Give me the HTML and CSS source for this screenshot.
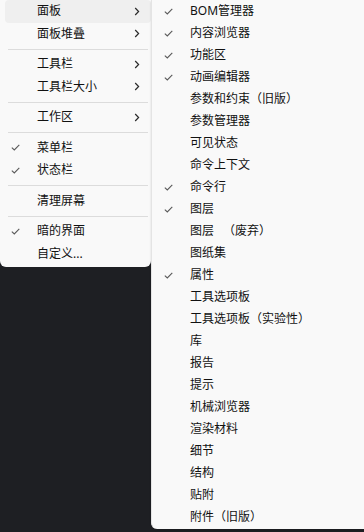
FILE: index.html
```html
<!DOCTYPE html>
<html>
<head>
    <title>面板菜单</title>
    <link rel="stylesheet" href="styles.css">
</head>
<body>
    <div class="menu main-menu">
        <div class="item active"><span class="check"></span><span class="label">面板</span><span class="arrow"><svg width="6" height="9" viewBox="0 0 6 9"><path d="M1.2 1 L4.6 4.5 L1.2 8" /></svg></span></div>
        <div class="item"><span class="check"></span><span class="label">面板堆叠</span><span class="arrow"><svg width="6" height="9" viewBox="0 0 6 9"><path d="M1.2 1 L4.6 4.5 L1.2 8" /></svg></span></div>
        <div class="separator"></div>
        <div class="item"><span class="check"></span><span class="label">工具栏</span><span class="arrow"><svg width="6" height="9" viewBox="0 0 6 9"><path d="M1.2 1 L4.6 4.5 L1.2 8" /></svg></span></div>
        <div class="item"><span class="check"></span><span class="label">工具栏大小</span><span class="arrow"><svg width="6" height="9" viewBox="0 0 6 9"><path d="M1.2 1 L4.6 4.5 L1.2 8" /></svg></span></div>
        <div class="separator"></div>
        <div class="item"><span class="check"></span><span class="label">工作区</span><span class="arrow"><svg width="6" height="9" viewBox="0 0 6 9"><path d="M1.2 1 L4.6 4.5 L1.2 8" /></svg></span></div>
        <div class="separator"></div>
        <div class="item"><span class="check"><svg width="9" height="7" viewBox="0 0 9 7"><path d="M0.8 3.6 L3.3 6 L8.3 0.8" /></svg></span><span class="label">菜单栏</span></div>
        <div class="item"><span class="check"><svg width="9" height="7" viewBox="0 0 9 7"><path d="M0.8 3.6 L3.3 6 L8.3 0.8" /></svg></span><span class="label">状态栏</span></div>
        <div class="separator"></div>
        <div class="item"><span class="check"></span><span class="label">清理屏幕</span></div>
        <div class="separator"></div>
        <div class="item"><span class="check"><svg width="9" height="7" viewBox="0 0 9 7"><path d="M0.8 3.6 L3.3 6 L8.3 0.8" /></svg></span><span class="label">暗的界面</span></div>
        <div class="item"><span class="check"></span><span class="label">自定义...</span></div>
    </div>

    <div class="menu sub-menu">
        <div class="item"><span class="check"><svg width="9" height="7" viewBox="0 0 9 7"><path d="M0.8 3.6 L3.3 6 L8.3 0.8" /></svg></span><span class="label">BOM管理器</span></div>
        <div class="item"><span class="check"><svg width="9" height="7" viewBox="0 0 9 7"><path d="M0.8 3.6 L3.3 6 L8.3 0.8" /></svg></span><span class="label">内容浏览器</span></div>
        <div class="item"><span class="check"><svg width="9" height="7" viewBox="0 0 9 7"><path d="M0.8 3.6 L3.3 6 L8.3 0.8" /></svg></span><span class="label">功能区</span></div>
        <div class="item"><span class="check"><svg width="9" height="7" viewBox="0 0 9 7"><path d="M0.8 3.6 L3.3 6 L8.3 0.8" /></svg></span><span class="label">动画编辑器</span></div>
        <div class="item"><span class="check"></span><span class="label">参数和约束（旧版）</span></div>
        <div class="item"><span class="check"></span><span class="label">参数管理器</span></div>
        <div class="item"><span class="check"></span><span class="label">可见状态</span></div>
        <div class="item"><span class="check"></span><span class="label">命令上下文</span></div>
        <div class="item"><span class="check"><svg width="9" height="7" viewBox="0 0 9 7"><path d="M0.8 3.6 L3.3 6 L8.3 0.8" /></svg></span><span class="label">命令行</span></div>
        <div class="item"><span class="check"><svg width="9" height="7" viewBox="0 0 9 7"><path d="M0.8 3.6 L3.3 6 L8.3 0.8" /></svg></span><span class="label">图层</span></div>
        <div class="item"><span class="check"></span><span class="label">图层&ensp; （废弃）</span></div>
        <div class="item"><span class="check"></span><span class="label">图纸集</span></div>
        <div class="item"><span class="check"><svg width="9" height="7" viewBox="0 0 9 7"><path d="M0.8 3.6 L3.3 6 L8.3 0.8" /></svg></span><span class="label">属性</span></div>
        <div class="item"><span class="check"></span><span class="label">工具选项板</span></div>
        <div class="item"><span class="check"></span><span class="label">工具选项板（实验性）</span></div>
        <div class="item"><span class="check"></span><span class="label">库</span></div>
        <div class="item"><span class="check"></span><span class="label">报告</span></div>
        <div class="item"><span class="check"></span><span class="label">提示</span></div>
        <div class="item"><span class="check"></span><span class="label">机械浏览器</span></div>
        <div class="item"><span class="check"></span><span class="label">渲染材料</span></div>
        <div class="item"><span class="check"></span><span class="label">细节</span></div>
        <div class="item"><span class="check"></span><span class="label">结构</span></div>
        <div class="item"><span class="check"></span><span class="label">贴附</span></div>
        <div class="item"><span class="check"></span><span class="label">附件（旧版）</span></div>
    </div>
</body>
</html>
```

FILE: styles.css
```css
body {
    margin: 0;
    padding: 0;
    background-color: #1e1f23;
    display: flex;
    align-items: flex-start;
    overflow: hidden;
    height: 532px;
    font-family: "Noto Sans", "Noto Sans CJK SC", sans-serif;
    font-size: 12px;
    color: #111111;
}

.menu {
    background-color: #f9f9f9;
}

.main-menu {
    width: 151px;
    flex-shrink: 0;
    padding-bottom: 2px;
    border-bottom-left-radius: 6px;
    border-bottom-right-radius: 6px;
}

.sub-menu {
    flex: 1;
    min-width: 0;
    padding-bottom: 1px;
    border-left: 1px solid #e4e4e4;
    border-bottom-left-radius: 6px;
    box-shadow: 0 1px 2px rgba(0, 0, 0, 0.15);
}

.item {
    display: grid;
    grid-template-columns: 32px 1fr 28px;
    align-items: center;
    height: 22.5px;
    margin-left: 5px;
    border-radius: 4px;
    line-height: 16px;
}

.sub-menu .item {
    height: 22px;
    margin-left: 6px;
}

.item.active {
    background-color: #efefef;
}

.check {
    display: flex;
    align-items: center;
    padding-left: 6px;
}

.check svg path {
    fill: none;
    stroke: #5a5a5a;
    stroke-width: 1.1;
}

.label {
    white-space: nowrap;
}

.arrow {
    display: flex;
    justify-content: center;
    align-items: center;
}

.arrow svg path {
    fill: none;
    stroke: #2a2a2a;
    stroke-width: 1.2;
}

.separator {
    height: 1px;
    margin: 3.5px 3px 3.5px 8px;
    background-color: #dcdcdc;
}
```
